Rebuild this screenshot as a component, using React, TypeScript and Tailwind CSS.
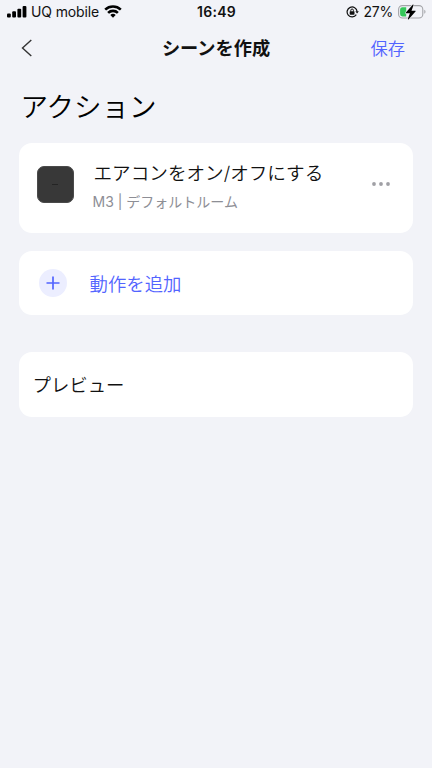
import type { ReactNode } from 'react';

function SignalIcon() {
  return (
    <svg width="20" height="12" viewBox="0 0 20 12" fill="#000">
      <rect x="0" y="7.5" width="3.8" height="4" rx="1" />
      <rect x="5.2" y="5.3" width="3.8" height="6.2" rx="1" />
      <rect x="10.4" y="2.8" width="3.8" height="8.7" rx="1" />
      <rect x="15.6" y="0" width="3.8" height="11.5" rx="1" />
    </svg>
  );
}

function WifiIcon() {
  return (
    <svg width="18" height="13" viewBox="0 0 18 13" fill="none" stroke="#000" strokeWidth="2.6">
      <path d="M1.2 4.6a11.4 11.4 0 0 1 15.6 0" />
      <path d="M4.1 7.9a7 7 0 0 1 9.8 0" />
      <path d="M9 12.7 6.3 10.1a3.8 3.8 0 0 1 5.4 0Z" fill="#000" stroke="none" />
    </svg>
  );
}

function RotationLockIcon() {
  return (
    <svg width="13" height="12" viewBox="0 0 13 12" fill="none" stroke="#111">
      <path d="M10.3 8.7a5 5 0 1 1 .8-3.2" strokeWidth="1.2" />
      <path d="M9.4 5.3h3.4l-1.7 2.3Z" fill="#111" stroke="none" />
      <rect x="3.7" y="5.2" width="4.8" height="3.5" rx="0.6" fill="#111" stroke="none" />
      <path d="M4.8 5.6V4.3a1.3 1.3 0 0 1 2.6 0v1.3" strokeWidth="1" />
    </svg>
  );
}

function BatteryIcon() {
  return (
    <svg width="28" height="16" viewBox="0 0 28 16">
      <rect x="0.6" y="1.6" width="24.2" height="12.4" rx="3.8" fill="none" stroke="#a3a4a8" strokeWidth="1.1" />
      <path d="M26.3 5.8c1.6.6 1.6 3.4 0 4Z" fill="#a3a4a8" />
      <path d="M4.4 3.2h3.8v9.2H4.4A2.3 2.3 0 0 1 2.1 10V5.5a2.3 2.3 0 0 1 2.3-2.3Z" fill="#34c759" />
      <path
        d="M14.7.8 7.9 8.5c-.3.4-.1.8.3.8h3.7l-2 5.5c-.2.6.4.8.8.4l6.8-7.7c.3-.4.1-.8-.3-.8h-3.7l2-5.5c.2-.6-.4-.8-.8-.4Z"
        fill="#000"
        stroke="#f2f3f8"
        strokeWidth="1.2"
        paintOrder="stroke"
      />
    </svg>
  );
}

function StatusBar() {
  return (
    <div className="grid h-6 grid-cols-3 items-center pl-[7px] pr-[6px] text-[14px] font-normal leading-6">
      <div className="flex items-center">
        <SignalIcon />
        <span className="ml-[4px] whitespace-nowrap tracking-[-0.12px]">UQ mobile</span>
        <span className="ml-[5px] pb-0.5">
          <WifiIcon />
        </span>
      </div>
      <span className="text-center font-semibold tracking-[0.25px]">16:49</span>
      <div className="flex items-center justify-end">
        <RotationLockIcon />
        <span className="ml-[4px] mr-[5px] tracking-[-0.2px]">27%</span>
        <BatteryIcon />
      </div>
    </div>
  );
}

function Card({ className, children }: { className: string; children: ReactNode }) {
  return <div className={`flex items-center rounded-[13px] bg-white ${className}`}>{children}</div>;
}

export default function App() {
  return (
    <div
      className="min-h-screen bg-[#f2f3f8] font-['Inter','Noto_Sans_CJK_JP',sans-serif] font-[350] text-[#111]"
      lang="ja"
    >
      <StatusBar />

      {/* Navigation */}
      <header className="grid h-12 grid-cols-[1fr_auto_1fr] items-center pl-[21px] pr-[27px]">
        <button aria-label="戻る">
          <svg width="12" height="18" viewBox="0 0 12 18" fill="none" stroke="#333" strokeWidth="1.4">
            <path d="M10.3 1 1.5 9l8.8 8" />
          </svg>
        </button>
        <h1 className="ml-[6px] text-[18.2px] font-bold leading-6">シーンを作成</h1>
        <button className="justify-self-end pt-px text-[17.3px] leading-6 text-[#5264ff]">保存</button>
      </header>

      <main className="pl-[18.5px] pr-[19px]">
        <h2 className="ml-[2px] mt-[15px] text-[27.5px] leading-10 text-black">アクション</h2>

        <Card className="mt-[16px] h-[89.5px] pb-[7px] pl-[18px] pr-[23px]">
          <div className="flex size-[37px] items-center justify-center rounded-[7px] border border-[#4a4a4a] bg-[#383838]">
            <span className="h-px w-[6px] bg-[#242424]" />
          </div>
          <div className="ml-[19px] flex-1 whitespace-nowrap pt-[5px]">
            <p className="ml-[1px] text-[18.6px] leading-7">エアコンをオン/オフにする</p>
            <p className="mt-[3px] text-[14px] font-normal leading-6 text-[#8d8e95]">M3 | デフォルトルーム</p>
          </div>
          <svg width="18" height="4" viewBox="0 0 18 4" fill="#a0a0a5">
            <circle cx="2" cy="2" r="1.9" />
            <circle cx="9" cy="2" r="1.9" />
            <circle cx="16" cy="2" r="1.9" />
          </svg>
        </Card>

        <Card className="mt-[18.5px] h-16 pl-[20.5px]">
          <div className="flex size-7 items-center justify-center rounded-full bg-[#eceeff]">
            <svg width="14" height="14" viewBox="0 0 14 14" stroke="#5264ff" strokeWidth="1.7">
              <path d="M0.5 7h13M7 .5v13" />
            </svg>
          </div>
          <span className="ml-[22.5px] pt-px text-[18.4px] leading-7 text-[#5264ff]">動作を追加</span>
        </Card>

        <Card className="mt-[37px] h-[64.5px] pl-[14px]">
          <span className="pt-px text-[18.4px] leading-7">プレビュー</span>
        </Card>
      </main>
    </div>
  );
}
